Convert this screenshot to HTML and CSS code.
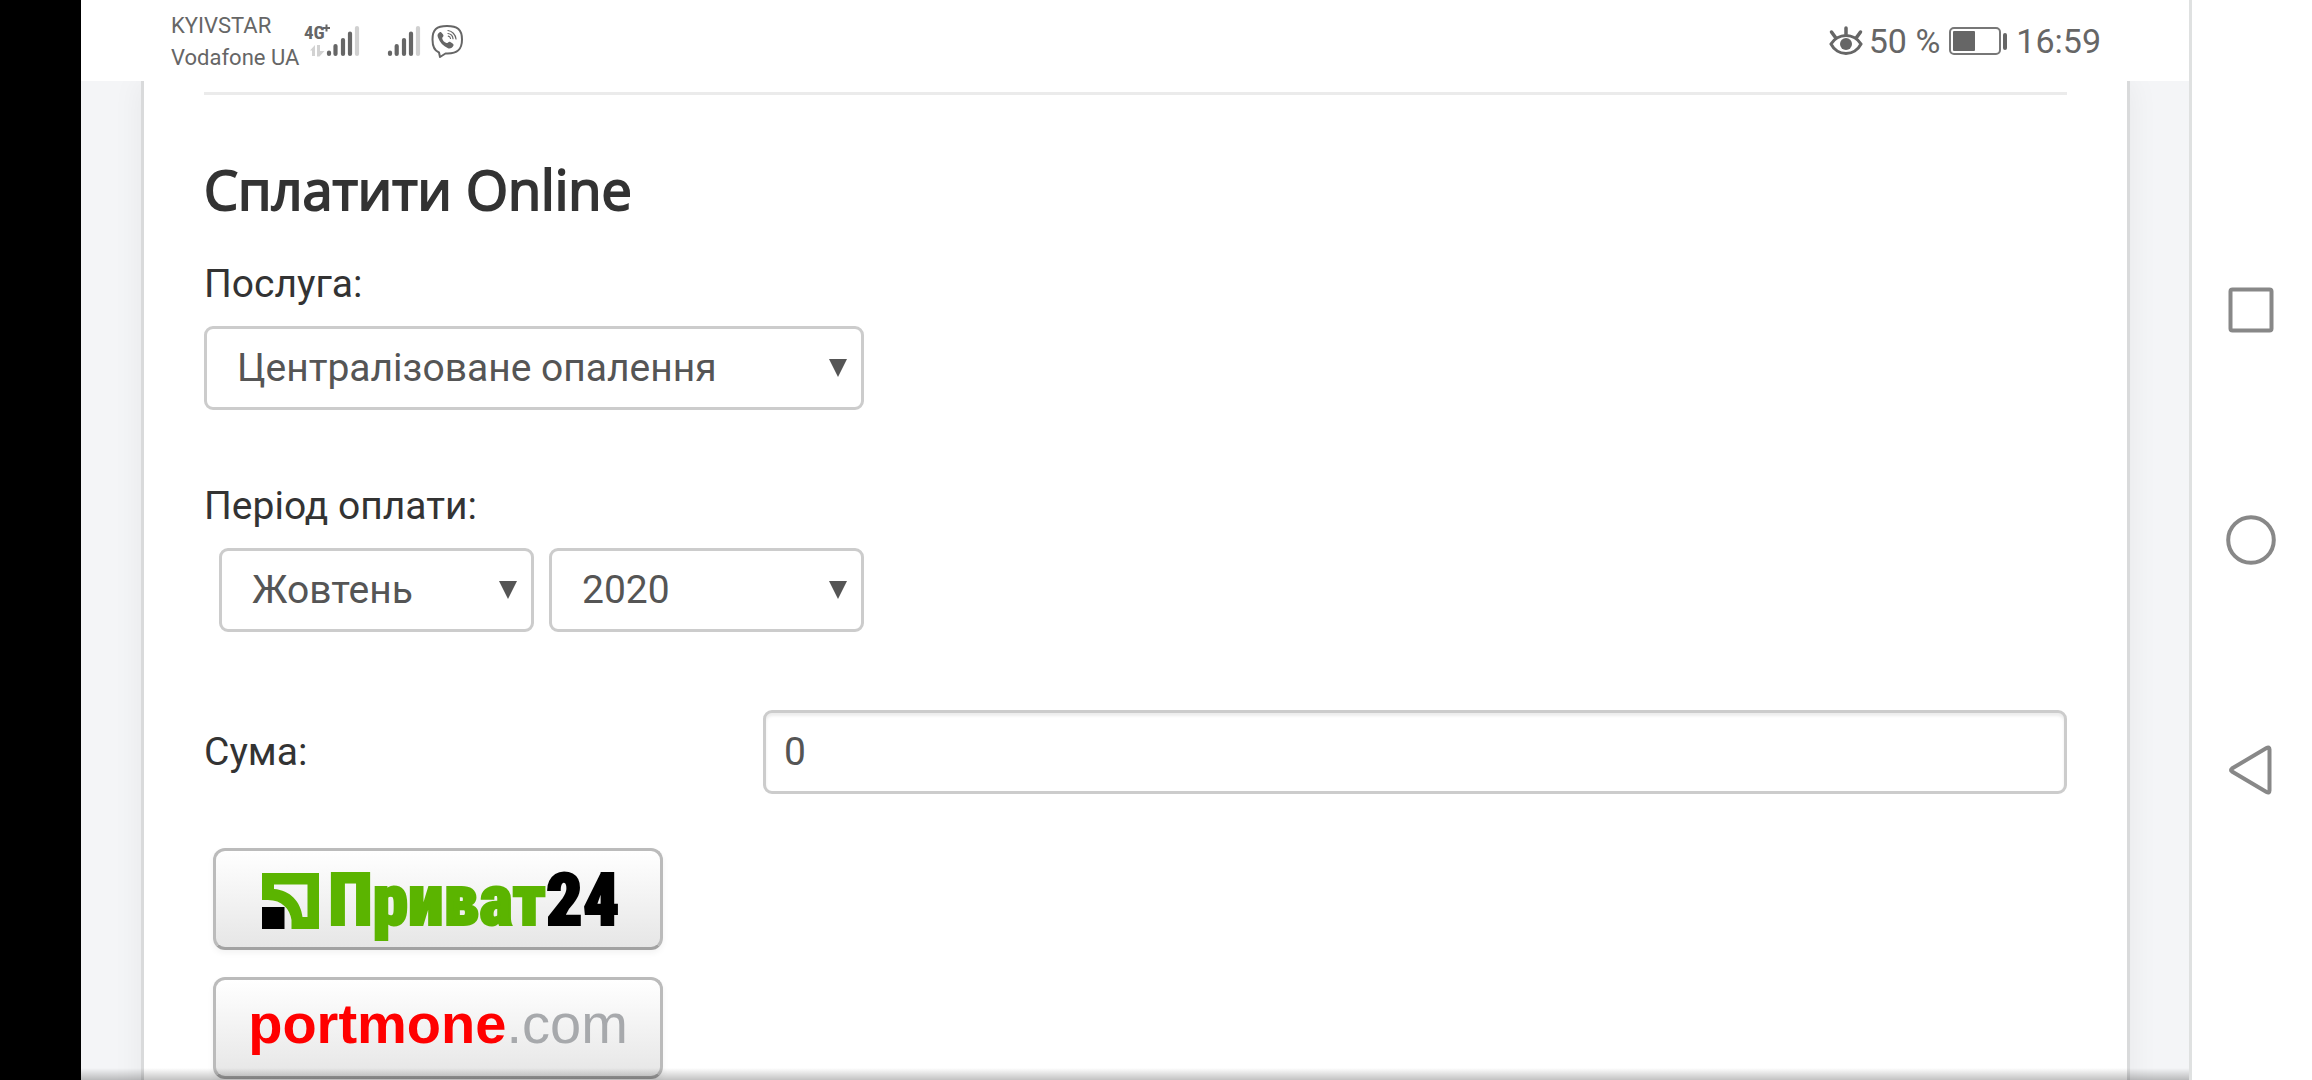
FILE: index.html
```html
<!DOCTYPE html>
<html lang="uk">
<head>
<meta charset="utf-8">
<meta name="viewport" content="width=device-width, initial-scale=1">
<title>Сплатити Online</title>
<link rel="stylesheet" href="styles.css">
</head>
<body>
<div class="screen">
  <div class="app">
    <header class="status">
      <div class="carriers"><span>KYIVSTAR</span><span>Vodafone UA</span></div>
      <svg class="signals" width="160" height="40" viewBox="303 20 160 40" aria-hidden="true">
        <text class="network" x="304" y="38">4G</text>
        <path d="M323 27h7M326.500 23.500v7" stroke="#666" stroke-width="2"/>
        <path d="M310 49.500l5-5.500v11h-3v-5.500zM317 44h3v6h4.500l-5 5.500h-2.500z" fill="#d2d2d2"/>
        <g stroke="#666" stroke-width="4.200" stroke-linecap="round">
          <path d="M329 51.500v1.500M335.500 45v8M343 39v14M350 32.500v20.500"/>
          <path d="M390 51.500v1.500M396.700 45v8M404 39v14M411 32.500v20.500"/>
        </g>
        <path d="M357 27v26M418 27v26" stroke="#d0d0d0" stroke-width="4.200" stroke-linecap="round"/>
        <g fill="none" stroke="#666" stroke-width="2" stroke-linecap="round" stroke-linejoin="round">
          <path d="M440 56l-1-4.500c-5-2-6.500-6-6.500-13 0-10 4-13.500 14.500-13.500s15 3.500 15 13.500-4.500 14-14.500 14h-2z"/>
          <path stroke-width="1.200" d="M448 29.500c4 .5 7.500 4 8 8.500M448 32.500c3 .5 4.800 2.500 5 5.200M448.300 35.200c1.300.2 2 1 2.200 2.300"/>
        </g>
        <path d="M440 31c-2.500 1.500-3 3-2 5.500 2 5 5 8.500 10 10.800 2 .9 4.500-.5 5.500-2.800.4-1-.3-1.700-3.500-3.700-1.200-.8-2.300 1.500-3.500 1.200-2.200-.7-4-2.500-4.300-4.800-.1-1 1.500-1.500 1.300-2.700-.2-1-2.300-3.900-3.500-3.500z" fill="#666"/>
      </svg>
      <div class="indicators">
        <svg width="34" height="30" viewBox="0 0 34 30" aria-hidden="true" fill="none" stroke="#666" stroke-linecap="round">
          <path stroke-width="3" d="M2 18c3-5 9-8.500 15-8.500s12 3.500 15 8.500c-3 6-9 9.500-15 9.500s-12-3.500-15-9.500z"/>
          <path stroke-width="3.500" d="M2.500 6l4 5.500M17 2v6M31.500 6l-4 5.500"/>
          <circle cx="17" cy="18" r="6" fill="#666" stroke="none"/>
        </svg>
        <span class="charge">50 %</span>
        <svg width="58" height="28" viewBox="0 0 58 28" aria-hidden="true">
          <rect x="1" y="1" width="50" height="26" rx="4" fill="none" stroke="#777" stroke-width="2"/>
          <rect x="4" y="4" width="22" height="20" rx="1" fill="#666"/>
          <rect x="54" y="6" width="4" height="17" rx="2" fill="#666"/>
        </svg>
        <time>16:59</time>
      </div>
    </header>
    <main class="page">
      <section class="panel">
        <hr class="divider">
        <h1>Сплатити Online</h1>
        <form>
          <div class="field">
            <label for="service">Послуга:</label>
            <select id="service" class="control"><option>Централізоване опалення</option></select>
          </div>
          <div class="field">
            <label for="month">Період оплати:</label>
            <div class="period">
              <select id="month" class="control"><option>Жовтень</option></select>
              <select class="control" aria-label="Рік"><option>2020</option></select>
            </div>
          </div>
          <div class="amount">
            <label for="sum">Сума:</label>
            <input id="sum" class="control" type="text" value="0">
          </div>
          <div class="payments">
            <button class="pay privat" type="submit">
              <svg width="57" height="56" viewBox="0 0 57 56" aria-hidden="true">
                <path fill="#5bb400" fill-rule="evenodd" d="M0 0h57v56H29.500V47C28 36 20 27 6 27H0zM12 11.500V16c16 1 27 13 28.500 28H45.500V11.500z"/>
                <path d="M0 34h22.500v22H0z"/>
              </svg>
              <span class="privat-name">Приват<b>24</b></span>
            </button>
            <button class="pay portmone" type="submit"><span><b>portmone</b>.com</span></button>
          </div>
        </form>
      </section>
    </main>
  </div>
  <nav class="system" aria-label="Навігація">
    <button type="button" aria-label="Огляд"><svg width="50" height="50" viewBox="0 0 50 50"><rect x="4.500" y="4.500" width="41" height="41" rx="2"/></svg></button>
    <button type="button" aria-label="Додому"><svg width="50" height="50" viewBox="0 0 50 50"><circle cx="25" cy="25" r="22.800"/></svg></button>
    <button type="button" aria-label="Назад"><svg width="50" height="50" viewBox="0 0 50 50"><path d="M43.500 4.500v41q0 3-3 1.500L6 26.500q-2-1.500 0-3L40.500 3q3-1.500 3 1.500z"/></svg></button>
  </nav>
</div>
</body>
</html>
```
FILE: styles.css
```css
* { box-sizing: border-box; }

body {
  margin: 0;
  background: #fff;
  color: #333;
  font: 39px/54px Roboto, "Noto Sans", sans-serif;
}

.screen {
  display: flex;
  height: 100vh;
  overflow: hidden;
  border-left: 81px solid #000;
}

.app {
  position: relative;
  flex: 1;
  display: flex;
  flex-direction: column;
  min-width: 0;
}

.app::after {
  content: "";
  position: absolute;
  inset: auto 0 0;
  height: 12px;
  background: linear-gradient(rgba(0, 0, 0, 0), rgba(0, 0, 0, .24));
}

.status {
  display: flex;
  align-items: center;
  flex: none;
  height: 81px;
  padding: 0 88px 0 90px;
  background: #fff;
  color: #666;
}

.carriers {
  display: flex;
  flex-direction: column;
  padding-top: 2px;
  font-size: 22px;
  line-height: 32px;
}

.signals { margin-left: 4px; }

.network {
  font: bold 19px "Roboto Condensed", Roboto, sans-serif;
  fill: #666;
}

.indicators {
  display: flex;
  align-items: center;
  gap: 9px;
  margin-left: auto;
  font-size: 34px;
}

.indicators svg:first-child { margin-right: -3px; }

.page {
  flex: 1;
  min-height: 0;
  overflow: hidden;
  padding: 0 59px 0 60px;
  background: #f4f5f7;
}

.panel {
  padding: 11px 60px 60px;
  border: solid #d9dadb;
  border-width: 0 3px;
  background: #fff;
  box-shadow: 0 0 30px rgba(0, 0, 0, .06);
}

.divider {
  height: 3px;
  margin: 0;
  border: 0;
  background: #ebebeb;
}

h1 {
  margin: 55px 0 29px;
  font: 400 54px/78px "Open Sans", "Noto Sans", sans-serif;
  -webkit-text-stroke: 2px currentColor;
}

.field {
  display: flex;
  flex-direction: column;
  gap: 15px;
  max-width: 660px;
  margin-bottom: 69px;
}

.control {
  width: 100%;
  height: 84px;
  padding: 0 30px;
  border: 3px solid #ccc;
  border-radius: 9px;
  background: #fff;
  color: #555;
  font: inherit;
}

select.control {
  appearance: none;
  background: #fff url("data:image/svg+xml,%3Csvg xmlns='http://www.w3.org/2000/svg' width='18' height='18'%3E%3Cpath d='M0 0h18L9 18z' fill='%23555'/%3E%3C/svg%3E") no-repeat right 14px top 30px;
}

.period {
  display: flex;
  gap: 15px;
  padding-left: 15px;
}

.amount {
  display: flex;
  align-items: center;
  justify-content: space-between;
  margin-top: 78px;
}

.amount .control {
  width: 70%;
  padding: 0 18px;
  box-shadow: inset 0 3px 3px rgba(0, 0, 0, .075);
}

.payments {
  display: flex;
  flex-direction: column;
  gap: 27px;
  padding: 54px 0 0 9px;
}

.pay {
  display: flex;
  align-items: center;
  justify-content: center;
  width: 450px;
  height: 102px;
  padding: 0;
  border: 3px solid #bbb;
  border-bottom-color: #a2a2a2;
  border-radius: 12px;
  background: linear-gradient(#fff, #e6e6e6);
  box-shadow: 0 3px 6px rgba(0, 0, 0, .05);
  white-space: nowrap;
}

.privat {
  gap: 9px;
  padding: 4px 0 0 6px;
}

.privat-name {
  color: #5bb400;
  font: 900 72px/90px "Roboto Condensed", "Open Sans Condensed", Roboto, sans-serif;
  -webkit-text-stroke: 2px currentColor;
}

.privat-name b { color: #000; }

.portmone {
  padding-bottom: 8px;
  color: #a7a9ac;
  font: 56px/60px "Liberation Sans", Arial, sans-serif;
}

.portmone b { color: #f00; }

.system {
  display: flex;
  flex-direction: column;
  align-items: center;
  justify-content: center;
  gap: 180px;
  flex: none;
  width: 123px;
  padding-right: 3px;
  border-left: 3px solid #dfe1e1;
  background: #fff;
}

.system button {
  display: flex;
  padding: 0;
  border: 0;
  background: none;
}

.system svg {
  fill: none;
  stroke: #888;
  stroke-width: 4px;
}
```
